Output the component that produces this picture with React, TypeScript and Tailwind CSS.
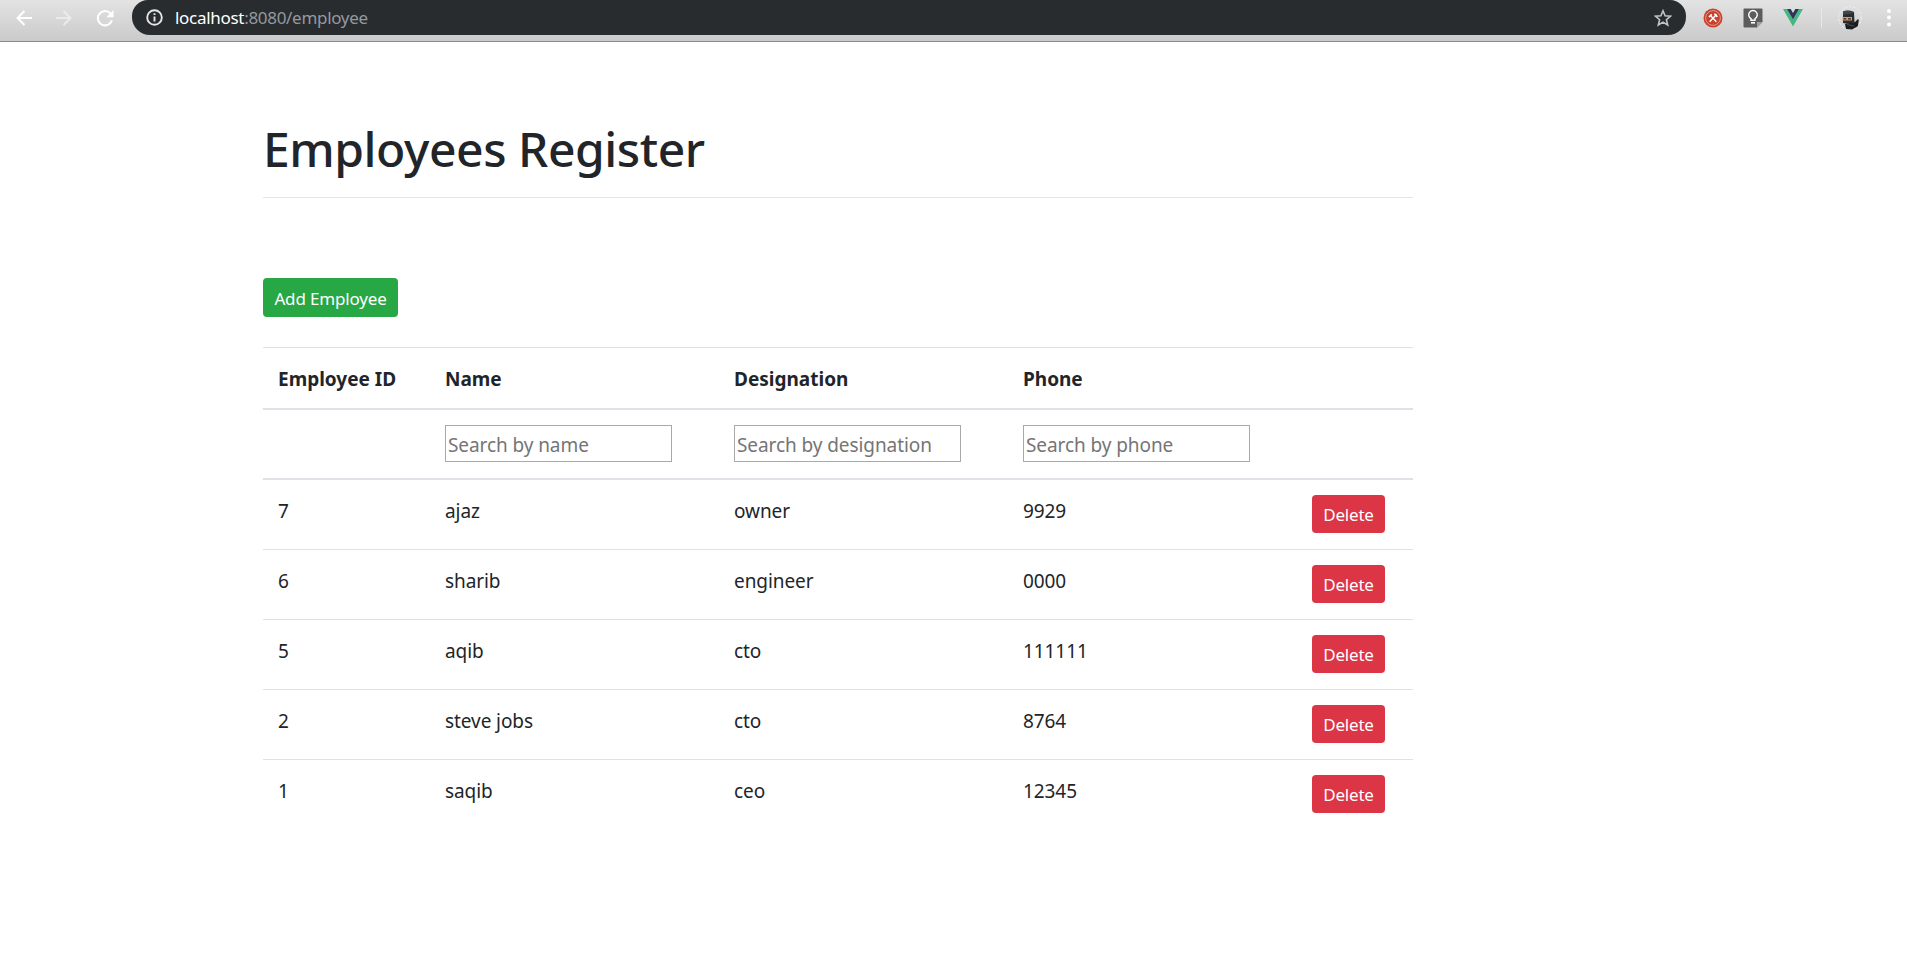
import React from "react";

const employees = [
  { id: "7", name: "ajaz", designation: "owner", phone: "9929" },
  { id: "6", name: "sharib", designation: "engineer", phone: "0000" },
  { id: "5", name: "aqib", designation: "cto", phone: "111111" },
  { id: "2", name: "steve jobs", designation: "cto", phone: "8764" },
  { id: "1", name: "saqib", designation: "ceo", phone: "12345" },
];

function BrowserBar() {
  return (
    <header className="flex h-[42px] items-start border-b border-[#8a8a8a] bg-linear-to-b from-[#e3e3e3] to-[#cacaca]">
      <div className="flex h-[35px] w-[132px] shrink-0 items-center gap-6 pl-4">
        <svg className="size-4" viewBox="0 0 16 16" fill="none" stroke="#fff" strokeWidth="2">
          <path d="M16 8H2M8.5 1L1.5 8l7 7" />
        </svg>
        <svg className="size-4" viewBox="0 0 16 16" fill="none" stroke="#ebebeb" strokeWidth="2">
          <path d="M0 8h14M7.5 1l7 7-7 7" />
        </svg>
        <svg className="size-[18px]" viewBox="0 0 18 18" fill="none">
          <path d="M14.3 4.2A7.2 7.2 0 1 0 15.9 11.4" stroke="#fff" strokeWidth="2" />
          <path d="M17.5 1v7.2h-7.2z" fill="#fff" />
        </svg>
      </div>
      <div className="flex h-[35px] w-[1554px] shrink-0 items-center rounded-b-[18px] rounded-t-[16px] bg-[#282c2f] pl-3.5 pr-3.5">
        <svg className="size-[17px]" viewBox="0 0 17 17" fill="none" stroke="#e4e6e8">
          <circle cx="8.5" cy="8.5" r="7.3" strokeWidth="1.9" />
          <path d="M8.5 7.4v5M8.5 4.3v1.8" strokeWidth="1.9" />
        </svg>
        <span className="pl-3 text-[17px] leading-[30px] tracking-[-0.3px] text-[#95999e]">
          <span className="text-white">localhost</span>:8080/employee
        </span>
        <svg className="ml-auto size-[18px]" viewBox="0 0 18 18" fill="none" stroke="#bfc3c7" strokeWidth="1.6">
          <path d="M9 1.8l2.1 5 5.4.4-4.1 3.5 1.3 5.3L9 13.1 4.3 16l1.3-5.3L1.5 7.2l5.4-.4z" />
        </svg>
      </div>
      <div className="flex h-[35px] items-center pl-[17px]">
        <svg className="size-5" viewBox="0 0 20 20" fill="none">
          <circle cx="10" cy="10" r="9.5" fill="#c9402c" />
          <circle cx="10" cy="10" r="7.4" stroke="#e3a196" strokeWidth="0.9" />
          <path d="M6.6 13.8L12.6 7.4M13.4 13.8L7.4 7.4" stroke="#fff" strokeWidth="1.4" />
          <path d="M6 9l2.800-2.600M11.200 6.200q2.300.4 2.900 2.800" stroke="#fff" strokeWidth="1.700" />
        </svg>
        <svg className="ml-5 size-5" viewBox="0 0 20 20" fill="none">
          <path d="M1.5.5h17q1 0 1 1V14l-5.500 5.500H1.500q-1 0-1-1v-17q0-1 1-1z" fill="#5c5c5c" />
          <path d="M19.500 14L14 19.500V14z" fill="#a0a0a0" />
          <path d="M8 12.300v-1.700a4.300 4.300 0 1 1 4 0v1.700z" stroke="#fff" strokeWidth="1.400" />
          <path d="M8 14.800h4" stroke="#fff" strokeWidth="1.600" />
        </svg>
        <svg className="ml-5 h-[18px] w-5" viewBox="0 0 20 18">
          <path d="M0 0h4l6 10.500L16 0h4L10 17.500z" fill="#42b983" />
          <path d="M4 0h3.700L10 4l2.300-4H16l-6 10.500z" fill="#2e3658" />
        </svg>
        <span className="ml-[18px] h-5 w-px bg-[#e8e8e8]" />
        <svg className="ml-4 size-6" viewBox="0 0 24 24" fill="none">
          <circle cx="12" cy="12" r="11.300" stroke="#f2f2f2" strokeWidth="0.900" strokeDasharray="2.500 1.500" />
          <path d="M5 5.500Q10 3.500 16 6l.5 10q-5 3-11.500 1z" fill="#292c31" />
          <path d="M5 6q3-2 8-.8L16 7l-5 1-6 .7z" fill="#41464c" />
          <path d="M4.500 11h9.500v3.500H4.500z" fill="#d49b6b" />
          <path d="M5.500 12.800h2.800M10 12.800h3" stroke="#36231b" strokeWidth="1.200" />
          <path d="M7 18l10-2 3-3 .8 1.200-1 6L14 23.500 8 23z" fill="#1a1d20" />
          <path d="M9 18.500l7 1.500" stroke="#4b5158" />
        </svg>
        <svg className="ml-[25px] h-[18px] w-1" viewBox="0 0 4 18" fill="#fff">
          <circle cx="2" cy="2" r="2" />
          <circle cx="2" cy="8.500" r="2" />
          <circle cx="2" cy="15.500" r="2" />
        </svg>
      </div>
    </header>
  );
}

function SearchCell({ placeholder }: { placeholder: string }) {
  return (
    <th className="border-b-2 border-[#dee2e6] px-[15px] pt-[15px] text-left align-top font-normal">
      <input
        placeholder={placeholder}
        className="block h-[37px] w-[227px] border border-[#a9a9a9] pl-0.5 pt-[3px] tracking-[-0.08px] placeholder:text-[#757575]"
      />
    </th>
  );
}

export default function App() {
  return (
    <div className="min-h-screen bg-white font-['Noto_Sans','Open_Sans',sans-serif] text-[19px] leading-[30px] text-[#212529]">
      <BrowserBar />
      <main className="ml-[263px] w-[1150px] pt-[77px]">
        <h1 className="text-[48px] font-medium leading-[60px] tracking-[-0.45px]">Employees Register</h1>
        <hr className="mt-[18px] border-[#e5e5e5]" />
        <button className="mt-20 block h-[39px] w-[135px] rounded-[4px] bg-[#28a745] pt-0.5 text-[17px] leading-[30px] tracking-[-0.17px] text-white">
          Add Employee
        </button>
        <table className="mt-[30px] w-full table-fixed border-separate border-spacing-0">
          <colgroup>
            <col className="w-[167px]" />
            <col className="w-[289px]" />
            <col className="w-[289px]" />
            <col className="w-[289px]" />
            <col className="w-[116px]" />
          </colgroup>
          <thead>
            <tr className="h-[63px]">
              {["Employee ID", "Name", "Designation", "Phone", ""].map((label, i) => (
                <th
                  key={i}
                  className="border-b-2 border-t border-[#dee2e6] px-[15px] pt-[15px] text-left align-top font-bold leading-8"
                >
                  {label}
                </th>
              ))}
            </tr>
            <tr className="h-[70px]">
              <th className="border-b-2 border-[#dee2e6]" />
              <SearchCell placeholder="Search by name" />
              <SearchCell placeholder="Search by designation" />
              <SearchCell placeholder="Search by phone" />
              <th className="border-b-2 border-[#dee2e6]" />
            </tr>
          </thead>
          <tbody className="tracking-[-0.08px] [&_td]:border-t [&_td]:border-[#dee2e6] [&_td]:px-[15px] [&_td]:pt-[15px] [&_td]:align-top [&_td]:leading-8 [&_tr]:h-[70px] [&_tr:first-child]:h-[69px] [&_tr:first-child_td]:border-t-0">
            {employees.map((e) => (
              <tr key={e.id}>
                <td>{e.id}</td>
                <td>{e.name}</td>
                <td>{e.designation}</td>
                <td>{e.phone}</td>
                <td>
                  <button className="block h-[38px] w-[73px] rounded-[4px] bg-[#dc3545] pt-0.5 text-[17px] leading-[30px] tracking-[-0.2px] text-white">
                    Delete
                  </button>
                </td>
              </tr>
            ))}
          </tbody>
        </table>
      </main>
    </div>
  );
}
